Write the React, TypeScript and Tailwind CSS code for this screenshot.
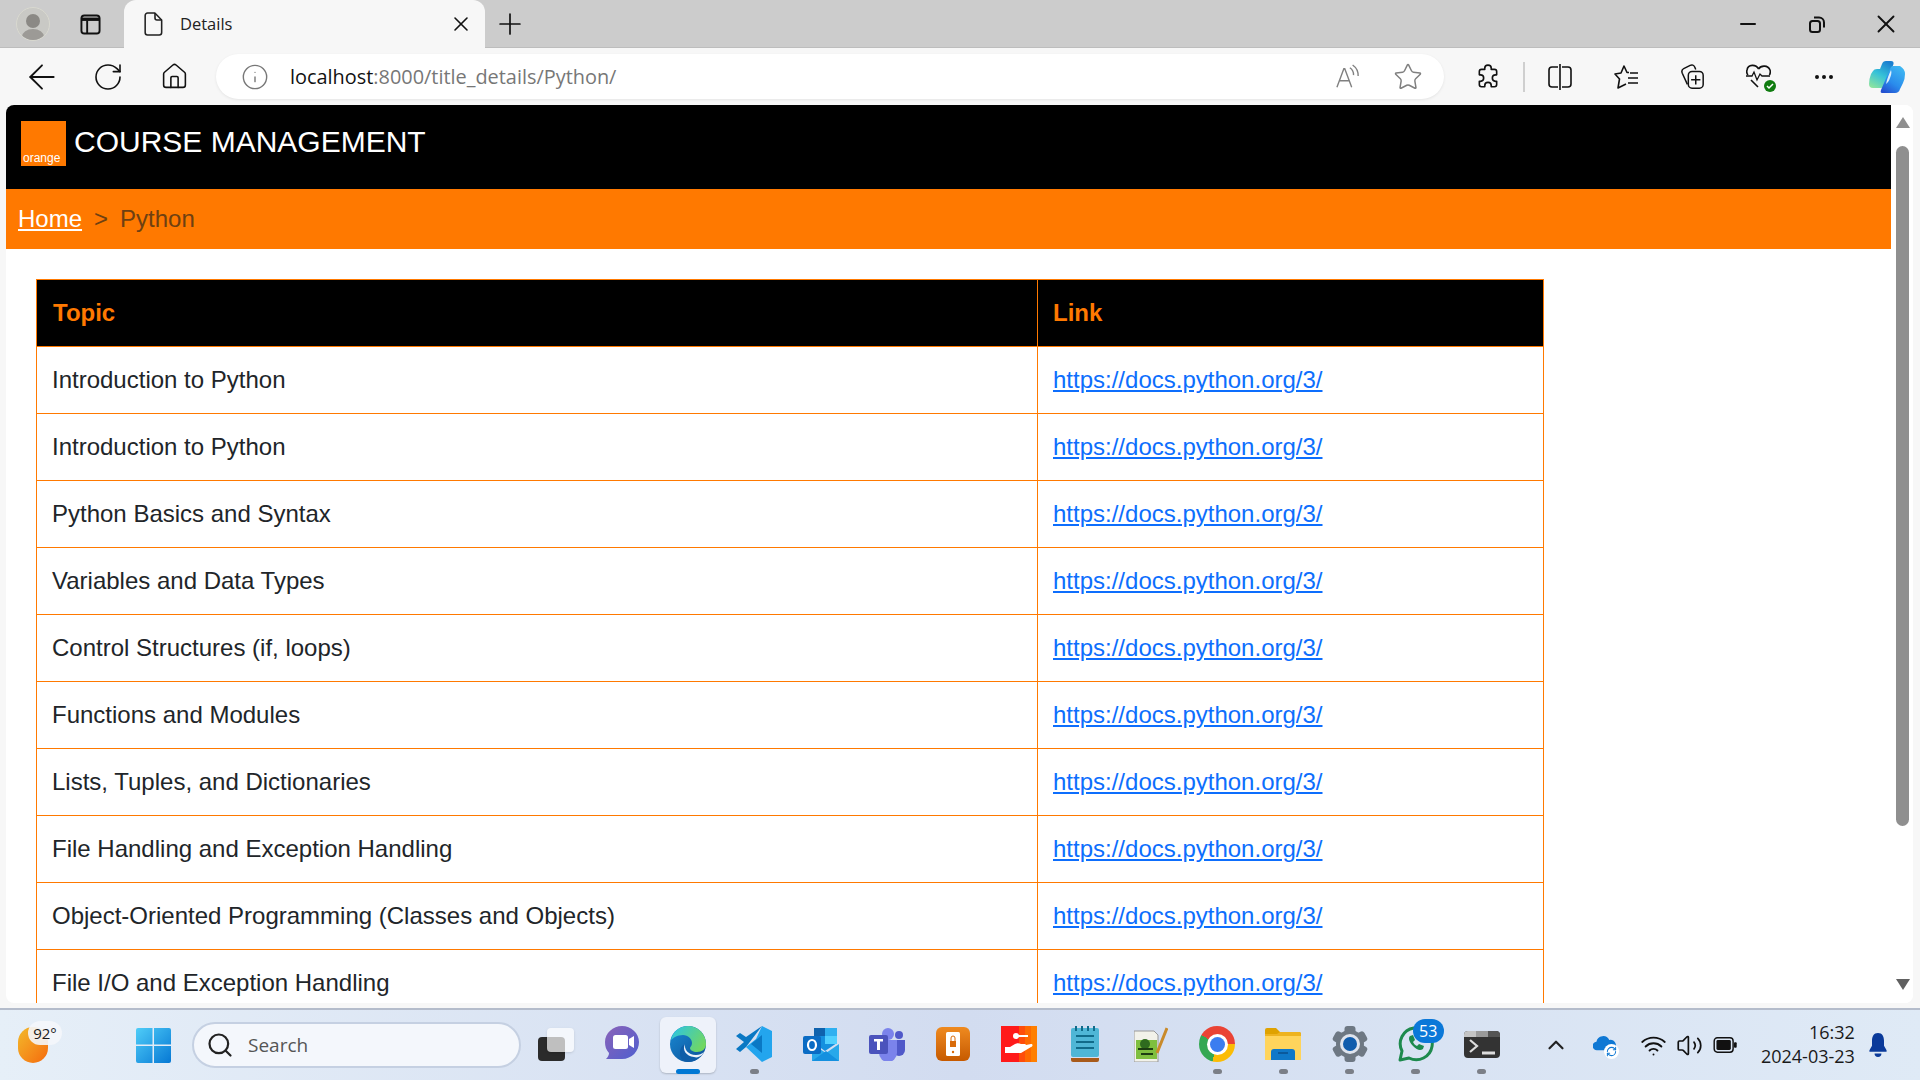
import { ArrowLeft, ChevronUp, Home, Info, Minus, MoreHorizontal, Plus, RefreshCw, RotateCw, Search, Star, Volume2, Wifi, X } from "lucide-react";

const rows = [
  "Introduction to Python",
  "Introduction to Python",
  "Python Basics and Syntax",
  "Variables and Data Types",
  "Control Structures (if, loops)",
  "Functions and Modules",
  "Lists, Tuples, and Dictionaries",
  "File Handling and Exception Handling",
  "Object-Oriented Programming (Classes and Objects)",
  "File I/O and Exception Handling",
];

function Tabs() {
  return (
    <div className="flex h-12 shrink-0 items-end bg-[#cccccc] shadow-[inset_0_-1px_0_#bdbdbd]">
      <div className="flex h-12 w-[124px] shrink-0 items-center">
        <div className="ml-[16px] flex h-[34px] w-[34px] items-end justify-center overflow-hidden rounded-full border border-[#d9d9d0] bg-[#c9c9c5]">
          <svg width="30" height="30" viewBox="0 0 30 30">
            <circle cx="15" cy="11" r="7" fill="#8b8985" />
            <ellipse cx="15" cy="27" rx="11" ry="8" fill="#9c9a96" />
          </svg>
        </div>
        <svg className="ml-[30px]" width="21" height="21" viewBox="0 0 22 22" fill="none" stroke="#111" strokeWidth="2">
          <rect x="1.5" y="1.5" width="19" height="19" rx="3" />
          <path d="M1.5 5.500h19" strokeWidth="3.500" />
          <path d="M7.500 7v13" />
        </svg>
      </div>
      <div className="flex h-12 w-[361px] shrink-0 items-center rounded-t-xl bg-[#f7f7f7] pl-[20px] pr-[12px]">
        <svg width="19" height="24" viewBox="0 0 19 24" fill="none" stroke="#222" strokeWidth="1.600" strokeLinejoin="round">
          <path d="M3.500 1h7.500l7 7v12.500a2.500 2.500 0 0 1-2.500 2.500h-12a2.500 2.500 0 0 1-2.500-2.500v-17a2.500 2.500 0 0 1 2.500-2.500z" transform="translate(.2 0) scale(.97 1)" />
          <path d="M11 1v5a2 2 0 0 0 2 2h5" />
        </svg>
        <span className="ml-[17px] flex-1 font-['Open_Sans',sans-serif] text-[16.5px] text-[#222]">Details</span>
        <X size={24} strokeWidth={1.6} className="text-[#111]" />
      </div>
      <div className="flex h-12 items-center pl-[8px]">
        <Plus size={34} strokeWidth={1.2} className="text-[#111]" />
      </div>
      <div className="ml-auto flex h-12 items-center text-[#111]">
        <div className="flex w-[69px] justify-center"><Minus size={24} strokeWidth={2} /></div>
        <div className="flex w-[69px] justify-center">
          <svg width="16" height="18" viewBox="0 0 16 18" fill="none" stroke="#111" strokeWidth="2">
            <rect x="1" y="6" width="10" height="11" rx="2.500" />
            <path d="M5 2.500h5a5 5 0 0 1 5 5v5" />
          </svg>
        </div>
        <div className="flex w-[69px] justify-center"><X size={30} strokeWidth={1.5} /></div>
      </div>
    </div>
  );
}

function Toolbar() {
  return (
    <div className="flex h-[57px] shrink-0 items-center bg-[#f7f7f7] text-[#111]">
      <div className="flex w-[216px] shrink-0 items-center pl-[22px]">
        <ArrowLeft size={40} strokeWidth={1.1} />
        <RotateCw size={32} strokeWidth={1.2} className="ml-[30px]" />
        <Home size={29} strokeWidth={1.3} className="ml-[36px]" />
      </div>
      <div className="flex h-[45px] w-[1228px] shrink-0 items-center rounded-full bg-white pl-[25px] pr-[21px] shadow-[0_1px_3px_rgba(0,0,0,0.08)]">
        <Info size={28} strokeWidth={1.2} className="text-[#777]" />
        <div className="ml-[21px] flex-1 font-['Open_Sans',sans-serif] text-[19.9px] text-[#777]">
          <span className="text-[#111]">localhost</span>:8000/title_details/Python/
        </div>
        <svg width="24" height="26" viewBox="0 0 26 28" fill="none" stroke="#808080" strokeWidth="1.500">
          <path d="M1 25 8.500 5h1L17 25M4 18h10" />
          <path d="M15 4a9 9 0 0 1 4 8M18 1a14 14 0 0 1 6 12" />
        </svg>
        <Star size={30} strokeWidth={1.2} className="ml-[33px] text-[#808080]" />
      </div>
      <div className="flex flex-1 items-center">
        <svg className="ml-[31px]" width="26" height="26" viewBox="0 0 24 24" fill="none" stroke="#111" strokeWidth="1.500" strokeLinejoin="round">
          <path d="M9 4a3 3 0 0 1 6 0v1h3a2 2 0 0 1 2 2v3h-1a3 3 0 0 0 0 6h1v3a2 2 0 0 1-2 2h-3v-1a3 3 0 0 0-6 0v1H6a2 2 0 0 1-2-2v-3h1a3 3 0 0 0 0-6H4V7a2 2 0 0 1 2-2h3z" />
        </svg>
        <div className="ml-[22px] h-[30px] w-[2px] bg-[#cfcfcf]" />
        <svg className="ml-[23px]" width="24" height="26" viewBox="0 0 24 26" fill="none" stroke="#111" strokeWidth="1.600">
          <path d="M10 3H4a3 3 0 0 0-3 3v14a3 3 0 0 0 3 3h6M14 3h6a3 3 0 0 1 3 3v14a3 3 0 0 1-3 3h-6M12 0v26" />
        </svg>
        <svg className="ml-[42px]" width="25" height="26" viewBox="0 0 25 26" fill="none" stroke="#111" strokeWidth="1.600" strokeLinejoin="round">
          <path d="M15 8.500h-2L10 2 7 9l-6 1 4.500 5L4 24l8-4" />
          <path d="M16 9h8M14 14h10M14 19h10" />
        </svg>
        <svg className="ml-[41px]" width="25" height="26" viewBox="0 0 25 28" fill="none" stroke="#111" strokeWidth="1.600">
          <path d="M7 22 1.500 10c-1-2.500-.5-4 1.500-5l7-3.500c2-1 4-.5 5 2l1 2.500" />
          <rect x="8" y="8" width="16" height="18" rx="4" />
          <path d="M16 12v10M11 17h10" />
        </svg>
        <div className="relative ml-[41px] h-[28px] w-[25px]">
          <svg width="25" height="28" viewBox="0 0 25 28" fill="none" stroke="#111" strokeWidth="1.600">
            <path d="M12.500 6C10 1 2 1 1 7c-.5 2 0 4 1 5M23.500 12c1-2 1-3.500.5-5-2-5-9-5-11.500-1M5 17l7 7" />
            <path d="M0 13h6l2-4 3 8 3-6 2 2h8" strokeWidth="1.300" />
          </svg>
          <div className="absolute bottom-[-1px] right-[-5px] flex h-[12px] w-[12px] items-center justify-center rounded-full bg-[#107c10]">
            <svg width="8" height="8" viewBox="0 0 8 8" fill="none" stroke="#fff" strokeWidth="1.500"><path d="m1 4 2 2 4-4" /></svg>
          </div>
        </div>
        <MoreHorizontal size={24} strokeWidth={2} className="ml-[41px]" />
        <svg className="ml-[33px]" width="36" height="32" viewBox="0 0 36 32">
          <defs>
            <linearGradient id="cpA" x1="0.7" y1="0" x2="0.2" y2="1">
              <stop offset="0" stopColor="#1b7fd0" />
              <stop offset="0.5" stopColor="#36c2d8" />
              <stop offset="1" stopColor="#8be3a0" />
            </linearGradient>
            <linearGradient id="cpB" x1="0.8" y1="0" x2="0.2" y2="1">
              <stop offset="0" stopColor="#3fb8f2" />
              <stop offset="0.6" stopColor="#2a8cec" />
              <stop offset="1" stopColor="#2450d0" />
            </linearGradient>
          </defs>
          <path d="M13 3q1-3 4-3h5q3 0 2.500 3L17 24q-1 3-5 3H4q-4 0-4-4 0-5 2-10l2-3q1-2 4-2h3z" fill="url(#cpA)" />
          <path d="M24 5h7q5 3 5 8 0 5-2 9l-3 6q-1 4-5 4H13q-2 0-1-3l9-21q1-3 3-3z" fill="url(#cpB)" />
          <path d="M22 9c-2 4-4 9-5 14 2-2 3-3 4-6 1-3 2-5 1-8z" fill="#fff" opacity="0.85" />
        </svg>
      </div>
    </div>
  );
}

function Page() {
  return (
    <div className="flex min-h-0 flex-1 bg-[#f7f7f7] pl-[6px] pr-[7px]">
      <div className="flex min-w-0 flex-1 overflow-hidden rounded-lg bg-white">
        <div className="min-w-0 flex-1 overflow-hidden font-['Liberation_Sans',Arial,sans-serif]">
          <div className="flex h-[84px] items-start bg-black pl-[15px] pt-[16px]">
            <div className="flex h-[45px] w-[45px] shrink-0 items-end bg-[#ff7900] pb-[1px] pl-[2px]">
              <span className="text-[12px] leading-[13px] text-white">orange</span>
            </div>
            <span className="ml-[8px] text-[30px] leading-[42px] text-white">COURSE MANAGEMENT</span>
          </div>
          <div className="flex h-[60px] items-center bg-[#ff7900] pl-[12px] text-[24px] text-[#6e4012]">
            <a href="#" className="text-white underline">Home</a>
            <span className="ml-[12px]">&gt;</span>
            <span className="ml-[12px]">Python</span>
          </div>
          <div className="pl-[30px] pt-[30px]">
            <table className="w-[1508px] table-fixed border-collapse text-[24px] text-[#212529]">
              <thead>
                <tr className="h-[67px] bg-black">
                  <th className="w-[1001px] border border-[#ff7900] pl-[16px] text-left font-bold text-[#ff7900]">Topic</th>
                  <th className="border border-[#ff7900] pl-[15px] text-left font-bold text-[#ff7900]">Link</th>
                </tr>
              </thead>
              <tbody>
                {rows.map((topic, i) => (
                  <tr key={i} className="h-[67px]">
                    <td className="border border-[#ff7900] pl-[15px]">{topic}</td>
                    <td className="border border-[#ff7900] pl-[15px]">
                      <a href="#" className="text-[#0d6efd] underline">https://docs.python.org/3/</a>
                    </td>
                  </tr>
                ))}
              </tbody>
            </table>
          </div>
        </div>
        <div className="relative w-[22px] shrink-0 bg-white">
          <div className="absolute left-[5px] top-[12px] h-0 w-0 border-x-[7px] border-b-[11px] border-x-transparent border-b-[#8f8f8f]" />
          <div className="absolute left-[5px] top-[41px] h-[680px] w-[13px] rounded-full bg-[#8f8f8f]" />
          <div className="absolute bottom-[13px] left-[5px] h-0 w-0 border-x-[7px] border-t-[11px] border-x-transparent border-t-[#606060]" />
        </div>
      </div>
    </div>
  );
}

function Slot({ children, dot, active }: { children: React.ReactNode; dot?: boolean; active?: boolean }) {
  return (
    <div className="relative flex h-[56px] w-[66.13px] shrink-0 items-center justify-center pb-[2px]">
      {active && <div className="absolute inset-y-0 left-[5px] right-[5px] rounded-md bg-[#eef2fa] shadow-[0_1px_2px_rgba(0,0,0,0.2)]" />}
      <div className="relative">{children}</div>
      {dot && <div className="absolute bottom-[-1px] h-[5px] w-[9px] rounded-full bg-[#7b7f87]" />}
      {active && <div className="absolute bottom-[-1px] h-[5px] w-[24px] rounded-full bg-[#0078d4]" />}
    </div>
  );
}

function TaskIcons() {
  return (
    <div className="flex items-center">
      <Slot>
        <div className="relative h-[33px] w-[36px]">
          <div className="absolute bottom-0 left-0 h-[24px] w-[27px] rounded-sm bg-[#2b2b2b]" />
          <div className="absolute right-0 top-0 h-[24px] w-[27px] rounded-sm bg-white/70 shadow-sm" />
        </div>
      </Slot>
      <Slot>
        <svg width="34" height="36" viewBox="0 0 34 36">
          <defs>
            <linearGradient id="meetA" x1="0" y1="0" x2="1" y2="1">
              <stop offset="0" stopColor="#8a62b8" />
              <stop offset="1" stopColor="#4f5fcf" />
            </linearGradient>
          </defs>
          <path d="M17 0c9 0 17 7 17 16s-7 17-17 17H1c2-2 3-4 3-6C1 24 0 20 0 16 0 7 8 0 17 0z" fill="url(#meetA)" />
          <rect x="8" y="9" width="15" height="14" rx="2.500" fill="#fff" />
          <path d="m24 13 5-3v12l-5-3z" fill="#fff" />
        </svg>
      </Slot>
      <Slot active>
        <svg width="36" height="36" viewBox="0 0 36 36">
          <defs>
            <linearGradient id="edgeA" x1="0" y1="0.2" x2="1" y2="0.7">
              <stop offset="0" stopColor="#2ec5e0" />
              <stop offset="1" stopColor="#74d85c" />
            </linearGradient>
            <linearGradient id="edgeB" x1="0" y1="0" x2="1" y2="1">
              <stop offset="0" stopColor="#1a8ad4" />
              <stop offset="1" stopColor="#0c4f96" />
            </linearGradient>
          </defs>
          <circle cx="18" cy="18" r="18" fill="url(#edgeB)" />
          <path d="M1 14C3 5 10 0 18 0c10 0 18 8 18 18 0 5-4 8-9 8-4 0-7-2-7-4 0-1 2-2 2-5 0-4-4-8-9-8-6 0-10 3-12 5z" fill="url(#edgeA)" />
          <path d="M15 18c-2 6 2 11 10 11 3 0 5-1 8-3-3 6-8 10-15 10-4 0-8-3-8-8 0-5 1-8 5-10z" fill="#0f5da8" />
          <path d="M15 18c-1 5 3 11 11 11 3 0 6-1 8-3l-2 3c-3 2-5 3-8 2-8-1-12-7-9-13z" fill="#eef2fa" />
        </svg>
      </Slot>
      <Slot dot>
        <svg width="36" height="36" viewBox="0 0 36 36">
          <path d="M26 0 36 5v26l-10 5-16-15 10-8z" fill="#23a5ee" />
          <path d="M26 0 10 21l-6 5-4-3 8-7-8-6 4-3 6 4zm0 9v18l-11-9z" fill="#0a78c4" fillRule="evenodd" />
        </svg>
      </Slot>
      <Slot>
        <svg width="36" height="33" viewBox="0 0 36 33">
          <path d="M11 0h23v15l-12 8-11-8z" fill="#1490df" />
          <path d="M11 0h11v8H11z" fill="#0f62ad" />
          <path d="M22 0h12v8H22z" fill="#30b0f0" />
          <path d="M22 8h12v8H22z" fill="#50d0ff" />
          <path d="M9 16l14 9 13-9v17H9z" fill="#28a8ea" />
          <path d="M9 33l14-10 13 10z" fill="#1490df" />
          <rect x="0" y="8" width="18" height="18" rx="2" fill="#0b6cc4" />
          <ellipse cx="9" cy="17" rx="4" ry="5" fill="none" stroke="#fff" strokeWidth="2.200" />
        </svg>
      </Slot>
      <Slot>
        <svg width="36" height="33" viewBox="0 0 36 33">
          <circle cx="30" cy="7" r="4" fill="#5059c9" />
          <circle cx="19" cy="6" r="6" fill="#7b83eb" />
          <path d="M24 12h12v10a6 6 0 0 1-12 0z" fill="#5059c9" />
          <path d="M10 12h18v13a8 8 0 0 1-18 0z" fill="#7b83eb" />
          <rect x="0" y="7" width="19" height="19" rx="2" fill="#4b53bc" />
          <path d="M5 11h9v2.500h-3V22H8v-8.500H5z" fill="#fff" />
        </svg>
      </Slot>
      <Slot>
        <div className="flex h-[34px] w-[34px] items-center justify-center rounded-md bg-gradient-to-b from-[#ef8a1f] to-[#c65a00]">
          <svg width="14" height="24" viewBox="0 0 14 24"><rect width="14" height="24" rx="1.500" fill="#fff" /><rect x="4" y="9" width="6" height="6" fill="#d96b0a" /><path d="M5 9V6a2 2 0 0 1 4 0v3" fill="none" stroke="#d96b0a" /><circle cx="7" cy="20" r="1.200" fill="#d96b0a" /></svg>
        </div>
      </Slot>
      <Slot>
        <div className="flex h-[36px] w-[36px] items-center justify-center bg-[linear-gradient(90deg,#ff1a1a_0_50%,#ff4d0a_50%_66%,#ff6a00_66%_84%,#ff7f00_84%)]">
          <svg width="28" height="24" viewBox="0 0 28 24" fill="#fff">
            <circle cx="11" cy="4" r="3" />
            <path d="M13 3h10v2h-10z" />
            <path d="M0 15h5l5-3c2-1 4-1 6 0h4c1 0 1 2 0 2h-4l10-2c2 0 2 2 0 3l-10 6H0z" />
          </svg>
        </div>
      </Slot>
      <Slot>
        <svg width="28" height="36" viewBox="0 0 28 36">
          <rect x="0" y="2" width="28" height="29" rx="2" fill="#4fb6d6" />
          <path d="M0 32h28v2a2 2 0 0 1-2 2H2a2 2 0 0 1-2-2z" fill="#a85a1a" />
          <path d="M5 10h18M5 16h18M5 22h18" stroke="#116b8a" strokeWidth="2" />
          <path d="M5 0v5M11 0v5M17 0v5M23 0v5" stroke="#116b8a" strokeWidth="2" />
        </svg>
      </Slot>
      <Slot>
        <svg width="34" height="35" viewBox="0 0 34 35">
          <path d="M0 4h20l4 4v27H0z" fill="#f2f2ea" stroke="#999" />
          <rect x="2" y="13" width="21" height="19" fill="#7fbf3f" />
          <circle cx="11" cy="17" r="5" fill="#2f6b1f" />
          <path d="M4 22h15M7 27h12" stroke="#1d3d12" strokeWidth="2" />
          <path d="M33 1 23 26" stroke="#c98a2a" strokeWidth="3" />
        </svg>
      </Slot>
      <Slot dot>
        <div className="h-[36px] w-[36px] rounded-full bg-[conic-gradient(from_300deg,#ea4335_0deg_150deg,#fbbc05_150deg_255deg,#34a853_255deg_360deg)] p-[10.5px]">
          <div className="h-full w-full rounded-full bg-[#3b7df0] ring-[3px] ring-white" />
        </div>
      </Slot>
      <Slot dot>
        <svg width="36" height="32" viewBox="0 0 36 32">
          <path d="M0 2a2 2 0 0 1 2-2h9l4 4h19a2 2 0 0 1 2 2v6H0z" fill="#dfa200" />
          <path d="M0 6h36v26H0z" fill="#ffd45c" />
          <path d="M0 6h12l3-2h19a2 2 0 0 1 2 2v2H0z" fill="#eeb320" />
          <path d="M6 24a3 3 0 0 1 3-3h18a3 3 0 0 1 3 3v8H6z" fill="#0f78c8" />
          <path d="M13 25h10" stroke="#0a4f8e" strokeWidth="1.500" />
        </svg>
      </Slot>
      <Slot dot>
        <svg width="36" height="36" viewBox="0 0 36 36">
          <g fill="#6e7883">
            <circle cx="18" cy="18" r="14" />
            <rect x="12.500" y="0" width="11" height="36" rx="3" />
            <rect x="12.500" y="0" width="11" height="36" rx="3" transform="rotate(60 18 18)" />
            <rect x="12.500" y="0" width="11" height="36" rx="3" transform="rotate(120 18 18)" />
          </g>
          <circle cx="18" cy="18" r="10" fill="#dfe4ee" />
          <circle cx="18" cy="18" r="7" fill="#0f5cad" />
        </svg>
      </Slot>
      <Slot dot>
        <div className="relative">
          <svg width="36" height="36" viewBox="0 0 36 36" fill="none">
            <path d="M2 34l2-9a16 16 0 1 1 7 7z" stroke="#1d8a4d" strokeWidth="3" strokeLinejoin="round" />
            <path d="M12 10c-2 2-1 6 3 10s7 5 10 3l1-3-5-2-2 2c-2-1-3-2-4-4l2-2-2-5z" fill="#1d8a4d" />
          </svg>
          <div className="absolute -right-[10px] -top-[7px] flex h-[24px] w-[31px] items-center justify-center rounded-full bg-[#0b78d8] font-['Open_Sans',sans-serif] text-[16px] text-white">53</div>
        </div>
      </Slot>
      <Slot dot>
        <div className="flex h-[27px] w-[36px] flex-col overflow-hidden rounded-sm bg-[#333333]">
          <div className="flex h-[6px]">
            <div className="flex-1 bg-[#c4c4c4]" />
            <div className="flex-1 bg-[#9a9a9a]" />
            <div className="flex-1 bg-[#555555]" />
          </div>
          <div className="flex flex-1 items-center pl-[5px]">
            <svg width="28" height="18" viewBox="0 0 28 18" fill="none" stroke="#ddd" strokeWidth="2.200">
              <path d="m1 2 7 6-7 6" />
              <path d="M13 15h13" strokeWidth="3" />
            </svg>
          </div>
        </div>
      </Slot>
    </div>
  );
}

function Taskbar() {
  return (
    <div className="mt-[5px] flex h-[72px] shrink-0 items-center border-t-2 border-[#b4bccb] bg-gradient-to-r from-[#e6eff8] via-[#d2dcf0] to-[#dfeaf6] font-['Open_Sans',sans-serif] text-[#1a1a1a]">
      <div className="relative ml-[18px] h-[36px] w-[30px] shrink-0 self-center">
        <div className="h-[36px] w-[30px] rounded-full bg-gradient-to-br from-[#f1b92b] to-[#f4680b]" />
        <div className="absolute left-[10px] top-[-6px] flex h-[24px] w-[34px] items-center justify-center rounded-xl bg-[#f4f6fb]/90 text-[15px]">92°</div>
      </div>
      <svg className="ml-[88px] shrink-0" width="35" height="35" viewBox="0 0 35 35">
        <defs>
          <linearGradient id="winA" x1="0" y1="0" x2="1" y2="1">
            <stop offset="0" stopColor="#4fcdf8" />
            <stop offset="1" stopColor="#0678d4" />
          </linearGradient>
        </defs>
        <path d="M0 2a2 2 0 0 1 2-2h14.500v16.500H0zM18 0h15a2 2 0 0 1 2 2v14.500H18zM0 18h16.500v17H2a2 2 0 0 1-2-2zM18 18h17v15a2 2 0 0 1-2 2H18z" fill="url(#winA)" />
      </svg>
      <div className="ml-[21px] flex h-[46px] w-[329px] shrink-0 items-center rounded-full border-2 border-[#c5d0e2] bg-[#f4f7fc] pl-[12px]">
        <Search size={28} strokeWidth={1.9} className="text-[#222]" />
        <span className="ml-[14px] text-[19px] text-[#555]">Search</span>
      </div>
      <div className="ml-[2px]"><TaskIcons /></div>
      <div className="ml-[28px] flex items-center">
        <ChevronUp size={26} strokeWidth={2} className="text-[#222]" />
        <div className="relative ml-[24px] h-[24px] w-[24px]">
          <svg width="24" height="19" viewBox="0 0 28 22">
            <path d="M5 20a5 5 0 0 1-1-10 8 8 0 0 1 15-2 6 6 0 0 1 3 12z" fill="#0f78d4" />
          </svg>
          <div className="absolute -bottom-[2px] -right-[2px] flex h-[15px] w-[15px] items-center justify-center rounded-full bg-white">
            <RefreshCw size={11} strokeWidth={2.2} className="text-[#0f78d4]" />
          </div>
        </div>
        <Wifi size={27} strokeWidth={1.7} className="ml-[23px] text-[#111]" />
        <Volume2 size={27} strokeWidth={1.5} className="ml-[9px] text-[#111]" />
        <svg className="ml-[10px]" width="24" height="18" viewBox="0 0 26 20">
          <rect x="1" y="2" width="21" height="16" rx="3.500" fill="none" stroke="#111" strokeWidth="1.600" />
          <rect x="3.500" y="4.500" width="16" height="11" rx="1.500" fill="#111" />
          <rect x="23" y="7" width="3" height="6" rx="1" fill="#111" />
        </svg>
      </div>
      <div className="ml-[13px] w-[105px] pb-[3px] text-right text-[18px] leading-[24px]">
        <div>16:32</div>
        <div className="whitespace-nowrap">2024-03-23</div>
      </div>
      <svg className="ml-[13px]" width="20" height="24" viewBox="0 0 20 28" fill="#0a3a9a">
        <path d="M10 0c5 0 7 4 7 9v6l3 5v2H0v-2l3-5V9c0-5 2-9 7-9z" />
        <path d="M6 24h8a4 4 0 0 1-8 0z" />
      </svg>
    </div>
  );
}

export default function App() {
  return (
    <div className="flex h-screen w-full flex-col overflow-hidden bg-[#f7f7f7]">
      <Tabs />
      <Toolbar />
      <Page />
      <Taskbar />
    </div>
  );
}
